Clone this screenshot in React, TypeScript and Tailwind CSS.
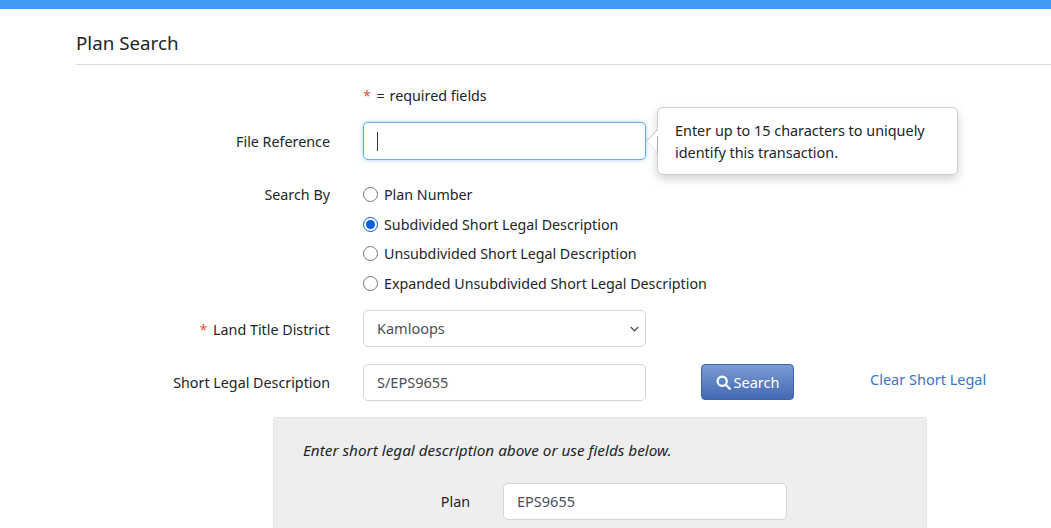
import React from "react";

function Row({ label, req, children, className = "", labelPad = "pt-[9px]" }: { label: string; req?: boolean; children: React.ReactNode; className?: string; labelPad?: string }) {
  return (
    <div className={`flex items-start ${className}`}>
      <div className={`w-[254px] ${labelPad} text-right leading-[22px] text-[#212529]`}>
        {req && <span className="mr-[2px] text-[#e0533d]">* </span>}
        {label}
      </div>
      <div className="ml-[33px] flex-1 relative">{children}</div>
    </div>
  );
}

function Radio({ label, checked }: { label: string; checked?: boolean }) {
  return (
    <label className="flex h-[29.6px] items-center">
      <input type="radio" name="by" defaultChecked={checked} className="m-0 h-[15px] w-[15px] accent-[#0060df]" />
      <span className="ml-[6px] text-[14.25px] text-[#212529]">{label}</span>
    </label>
  );
}

export default function App() {
  return (
    <div className="h-[528px] w-[1051px] overflow-hidden bg-white font-['Noto_Sans',sans-serif] text-[14.3px] text-[#212529]">
      <div className="h-[9px] bg-[#3d9bf3]" />
      <div className="ml-[76px]">
        <h1 className="h-[56px] border-b border-[#dcdcdc] pt-[19px] text-[18.75px] leading-[30px] text-[#212529]">Plan Search</h1>
        <div className="ml-[287px] mt-[20px] h-[22px] leading-[22px]">
          <span className="mr-[2px] text-[#e0533d]">*</span> = <span className="ml-[1px]">required fields</span>
        </div>
        <Row label="File Reference" className="mt-[15px]">
          <div className="relative flex h-[38px] w-[283px] items-center rounded-[5px] border border-[#66adee] bg-white pl-[13px] shadow-[0_0_4px_rgba(61,155,243,0.5)]">
            <span className="h-[19px] w-px bg-[#333]" />
          </div>
          <div className="absolute left-[294px] top-[-15px] w-[301px] rounded-[6px] border border-[#cfcfcf] bg-white pb-[10px] pl-[17px] pr-[14px] pt-[12px] text-[14.4px] leading-[22px] shadow-[0_4px_10px_rgba(0,0,0,0.18)]">
            <svg width="12" height="26" viewBox="0 0 12 26" className="absolute left-[-12px] top-[20px]">
              <polygon points="12,0 1,13 12,25" fill="#fff" />
              <path d="M12 1L1 13" stroke="#bdbdbd" strokeWidth="1" fill="none" />
              <path d="M1 13L12 25" stroke="#e6e6e6" strokeWidth="1" fill="none" />
              <path d="M11.5 8V25" stroke="#a8a8a8" strokeWidth="1" fill="none" />
            </svg>
            Enter up to 15 characters to uniquely identify this transaction.
          </div>
        </Row>
        <div className="mt-[20px] flex items-start">
          <div className="w-[254px] pt-[4px] text-right leading-[22px]">Search By</div>
          <div className="ml-[33px]">
            <Radio label="Plan Number" />
            <Radio label="Subdivided Short Legal Description" checked />
            <Radio label="Unsubdivided Short Legal Description" />
            <Radio label="Expanded Unsubdivided Short Legal Description" />
          </div>
        </div>
        <Row label="Land Title District" req className="mt-[12px]">
          <div className="flex h-[37px] w-[283px] items-center justify-between rounded-[5px] border border-[#d4d4d4] bg-white pl-[13px] pr-[6px] text-[14.5px] text-[#495057]">
            Kamloops
            <svg width="9" height="6" viewBox="0 0 9 6" fill="none" stroke="#555" strokeWidth="1.3"><path d="M.7 1l3.8 3.8L8.3 1" /></svg>
          </div>
        </Row>
        <Row label="Short Legal Description" className="mt-[17px]" labelPad="pt-[8px]">
          <div className="flex items-start">
            <div className="flex h-[37px] w-[283px] items-center rounded-[5px] border border-[#d4d4d4] bg-white pl-[13px] text-[14.5px] text-[#495057]">S/EPS9655</div>
            <button className="ml-[55px] flex h-[36px] w-[93px] items-center justify-center rounded-[4px] border border-[#3d64a6] bg-gradient-to-b from-[#7a9bd4] to-[#4369b2] text-[14.5px] text-white">
              <svg width="15" height="15" viewBox="0 0 15 15" fill="none" stroke="white" strokeWidth="2.2" className="mr-[3px]"><circle cx="6.2" cy="6.2" r="4.6" /><path d="M9.8 9.8l4 4" strokeLinecap="round" /></svg>
              Search
            </button>
            <a className="ml-[76px] mt-[4px] text-[14.5px] leading-[22px] text-[#3a74c9]">Clear Short Legal</a>
          </div>
        </Row>
        <div className="ml-[197px] mt-[16px] h-[200px] w-[654px] rounded-[3px] border border-[#e3e3e3] bg-[#eeeeee] pl-[29px] pt-[21px]">
          <p className="text-[15.3px] italic leading-[22px]">Enter short legal description above or use fields below.</p>
          <div className="mt-[22px] flex items-center">
            <div className="w-[167px] text-right">Plan</div>
            <div className="ml-[33px] flex h-[37px] w-[284px] items-center rounded-[5px] border border-[#d4d4d4] bg-white pl-[13px] text-[14.5px] text-[#495057]">EPS9655</div>
          </div>
        </div>
      </div>
    </div>
  );
}
